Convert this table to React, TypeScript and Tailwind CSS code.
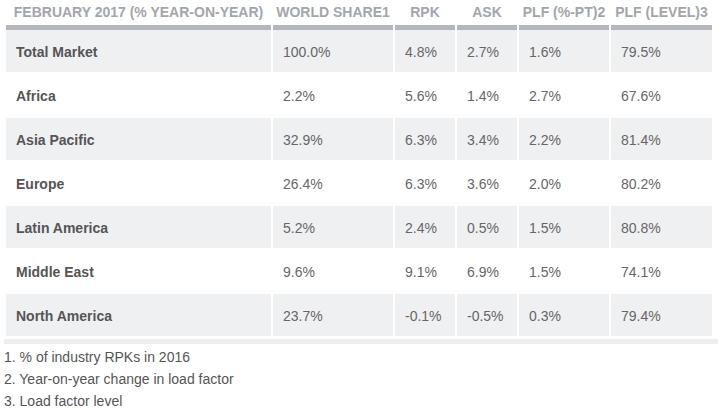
import React from "react";

const headers = [
  "FEBRUARY 2017 (% YEAR-ON-YEAR)",
  "WORLD SHARE1",
  "RPK",
  "ASK",
  "PLF (%-PT)2",
  "PLF (LEVEL)3",
];

const rows: string[][] = [
  ["Total Market", "100.0%", "4.8%", "2.7%", "1.6%", "79.5%"],
  ["Africa", "2.2%", "5.6%", "1.4%", "2.7%", "67.6%"],
  ["Asia Pacific", "32.9%", "6.3%", "3.4%", "2.2%", "81.4%"],
  ["Europe", "26.4%", "6.3%", "3.6%", "2.0%", "80.2%"],
  ["Latin America", "5.2%", "2.4%", "0.5%", "1.5%", "80.8%"],
  ["Middle East", "9.6%", "9.1%", "6.9%", "1.5%", "74.1%"],
  ["North America", "23.7%", "-0.1%", "-0.5%", "0.3%", "79.4%"],
];

const grid =
  "grid grid-cols-[265px_120px_60px_60px_90px_101px] gap-x-[2px]";

export default function App() {
  return (
    <div
      className="w-[718px] h-[411px] bg-white pl-[4px] text-[14px] overflow-hidden"
      style={{ fontFamily: '"Liberation Sans", Arial, sans-serif' }}
    >
      <div className="ml-[2px] w-[706px]">
        <div className={grid}>
          {headers.map((h) => (
            <div key={h} className="flex flex-col">
              <div className="h-[25px] flex items-center justify-center whitespace-nowrap font-bold text-[#a2a6ab] leading-none pb-[1px]">
                {h}
              </div>
              <div className="h-[5px] bg-[#b4b7bb]" />
            </div>
          ))}
        </div>
        <div className="flex flex-col gap-y-[2px]">
          {rows.map((r, i) => (
            <div key={r[0]} className={grid}>
              {r.map((c, j) => (
                <div
                  key={j}
                  className={`h-[42px] flex items-center pl-[10px] pt-[3px] whitespace-nowrap ${
                    i % 2 === 0 ? "bg-[#eff0f2]" : "bg-white"
                  } ${j === 0 ? "font-bold text-[#555555]" : "text-[#666666]"}`}
                >
                  {c}
                </div>
              ))}
            </div>
          ))}
        </div>
      </div>
      <div className="mt-[3px] h-[5px] w-[714px] bg-[#eceef0]" />
      <div className="text-[#555555] leading-[22px] pt-[2px]">
        <div>1. % of industry RPKs in 2016</div>
        <div>2. Year-on-year change in load factor</div>
        <div>3. Load factor level</div>
      </div>
    </div>
  );
}
